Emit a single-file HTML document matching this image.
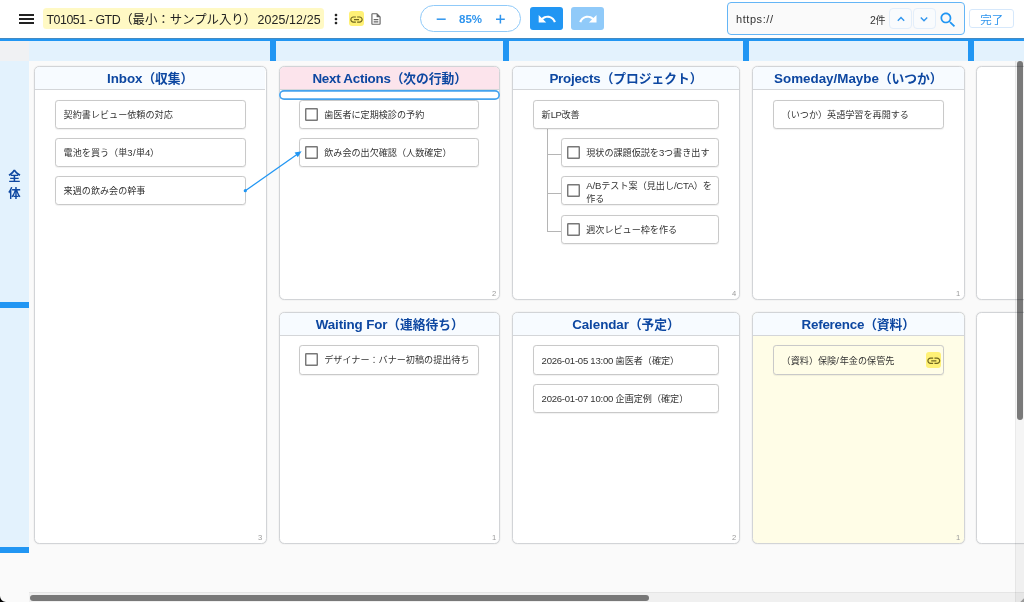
<!DOCTYPE html>
<html lang="ja">
<head>
<meta charset="utf-8">
<title>T01051 - GTD</title>
<style>
*{box-sizing:border-box;margin:0;padding:0}
html,body{width:1024px;height:602px;overflow:hidden;background:#fafafa}
body{position:relative;font-family:"Liberation Sans","Noto Sans CJK JP",sans-serif;color:#333;font-size:9.35px}
.abs{position:absolute}
.card,.zh,.cnt,#title,#rowlabel,#zoom b,#done,.tx{will-change:transform}
.l{font-size:1.05em}
.k{font-size:1em}
/* ---------- top bar ---------- */
#top{position:absolute;left:0;top:0;width:1024px;height:38px;background:#fff}
#bline{position:absolute;left:0;top:38px;width:1024px;height:3px;background:#2196f3;box-shadow:inset 0 1px 0 rgba(120,120,120,.4)}
#burger i{position:absolute;left:18.9px;width:14.9px;height:1.8px;background:#222}
#title{position:absolute;left:42.6px;top:8.2px;width:281.4px;height:21.2px;background:#fff9c4;border-radius:3.5px;font-size:12.4px;line-height:24.6px;color:#222;white-space:pre;padding-left:3.4px;overflow:hidden}
#zoom{position:absolute;left:420px;top:5px;width:101px;height:27px;border:1px solid #90caf9;border-radius:14px;background:#fff}
#zoom b{position:absolute;left:0;width:100%;top:0;line-height:27px;text-align:center;font-size:11.5px;color:#2f95ee;font-weight:700}
.btn{position:absolute;top:7.3px;width:32.7px;height:22.8px;border-radius:3px}
#search{position:absolute;left:727px;top:2px;width:238px;height:33px;border:1px solid #64b5f6;border-radius:4px;background:#fafafa}
#done{position:absolute;left:969.4px;top:9.3px;width:45.4px;height:19.4px;border:1px solid #d6e8fb;border-radius:3px;background:#fff;color:#2f95ee;font-size:11.5px;line-height:21.2px;text-align:center;overflow:hidden}
.nav{position:absolute;top:8px;height:21px;border:1px solid #e3eefa;border-radius:4px;background:#f9fbfd}
/* ---------- grid headers ---------- */
#corner{position:absolute;left:0;top:41px;width:29px;height:19.5px;background:#f0f1f3}
#colhead{position:absolute;left:29px;top:41px;width:995px;height:19.5px;background:#e3f2fd}
#rowhead{position:absolute;left:0;top:60.5px;width:29px;height:492.5px;background:#e3f2fd}
.vs{position:absolute;top:41px;width:6px;height:19.5px;background:#2196f3}
.hs{position:absolute;left:0;width:29px;height:6px;background:#2196f3}
#rowlabel{position:absolute;left:0;top:168.8px;width:29px;text-align:center;font-size:12.4px;line-height:17.3px;font-weight:700;color:#0d47a1}
/* ---------- zones ---------- */
.zone{position:absolute;background:#fff;border:1px solid #d2d4d7;border-radius:5.5px;overflow:hidden;box-shadow:0 0 1.5px rgba(0,0,0,.13)}
.zh{position:absolute;left:0;top:0;right:0;height:23.4px;background:#f7fbff;border-bottom:1px solid #d4d6d9;text-align:center;font-size:12.75px;line-height:24.6px;font-weight:700;color:#0d47a1;white-space:nowrap}
.cnt{position:absolute;right:3.2px;bottom:.6px;font-size:7.6px;line-height:8px;color:#9a9a9a}
.card{position:absolute;height:29px;background:#fff;border:1px solid #c9c9c9;border-radius:3.2px;white-space:nowrap;line-height:28px;padding-left:7.6px;color:#333;font-size:9.1px;box-shadow:0 .5px 1px rgba(0,0,0,.06)}
.card.c{padding-left:24.2px}
.cb{position:absolute;left:5.4px;top:7.4px;width:12.3px;height:12.7px;box-shadow:inset 0 0 0 1.45px #787878;border-radius:1.2px;background:#fff}
.ln{position:absolute;background:#b5b5b5}
/* ---------- scrollbars ---------- */
#vtrack{position:absolute;left:1014.6px;top:60.5px;width:9.4px;height:541.5px;background:rgba(0,0,0,.04);border-left:1px solid rgba(0,0,0,.045)}
#htrack{position:absolute;left:29px;top:592.4px;width:995px;height:10px;background:rgba(0,0,0,.04);border-top:1px solid rgba(0,0,0,.045)}
#vthumb{position:absolute;left:1016.9px;top:60.6px;width:6.1px;height:359.1px;border-radius:3.05px;background:rgba(0,0,0,.5)}
#hthumb{position:absolute;left:29.7px;top:594.6px;width:619.6px;height:6.2px;border-radius:3.1px;background:rgba(0,0,0,.5)}
</style>
</head>
<body>
<!-- grid headers -->
<div id="corner"></div>
<div id="colhead"></div>
<div id="rowhead"></div>
<div class="vs" style="left:269.7px"></div>
<div class="vs" style="left:503.1px"></div>
<div class="vs" style="left:743.1px"></div>
<div class="vs" style="left:967.5px"></div>
<div class="hs" style="top:302.4px"></div>
<div class="hs" style="top:547px"></div>
<div id="rowlabel">全<br>体</div>

<!-- ZONES -->
<div id="zones">
<!-- Inbox -->
<div class="zone" style="left:34.3px;top:66px;width:232.4px;height:477.6px"><div class="zh"><span class="l" style="letter-spacing:-0.063px">Inbox</span>（収集）</div><div class="cnt">3</div></div>
<div class="card" style="left:55px;top:99.6px;width:191px">契約書レビュー依頼の対応</div>
<div class="card" style="left:55px;top:138px;width:191px">電池を買う（単<span class="l" style="letter-spacing:0.325px">3/</span>単<span class="l" style="letter-spacing:-0.265px">4</span>）</div>
<div class="card" style="left:55px;top:176.4px;width:191px">来週の飲み会の幹事</div>

<!-- Next Actions -->
<div class="zone" style="left:278.6px;top:66px;width:221.6px;height:233.6px"><div class="zh" style="background:#fce4ec"><span class="l" style="letter-spacing:-0.258px">Next Actions</span>（次の行動）</div><div class="cnt">2</div></div>
<div class="abs" style="left:278.5px;top:89.8px;width:221.7px;height:10.1px;box-shadow:inset 0 0 0 1.7px #45a3ee;border-radius:5.1px;background:#fff"></div>
<div class="card c" style="left:299.4px;top:99.6px;width:180.2px"><i class="cb"></i>歯医者に定期検診の予約</div>
<div class="card c" style="left:299.4px;top:138px;width:180.2px"><i class="cb"></i>飲み会の出欠確認（人数確定）</div>

<!-- Projects -->
<div class="zone" style="left:512.1px;top:66px;width:228px;height:233.6px"><div class="zh"><span class="l" style="letter-spacing:-0.192px">Projects</span>（プロジェクト）</div><div class="cnt">4</div></div>
<div class="ln" style="left:546.5px;top:128.6px;width:1px;height:103.3px"></div>
<div class="ln" style="left:546.5px;top:154px;width:15px;height:1px"></div>
<div class="ln" style="left:546.5px;top:192.8px;width:15px;height:1px"></div>
<div class="ln" style="left:546.5px;top:230.9px;width:15px;height:1px"></div>
<div class="card" style="left:533.2px;top:99.8px;width:185.7px">新<span class="l" style="letter-spacing:-0.493px">LP</span>改善</div>
<div class="card c" style="left:561.1px;top:138.2px;width:157.8px"><i class="cb"></i>現状の課題仮説を<span class="l" style="letter-spacing:-0.265px">3</span>つ書き出す</div>
<div class="card c" style="left:561.1px;top:176.3px;width:157.8px;line-height:13.1px;padding-top:1.6px"><i class="cb"></i><span class="l" style="letter-spacing:-0.108px">A/B</span>テスト案（見出し<span class="l" style="letter-spacing:-0.347px">/CTA</span>）を<br>作る</div>
<div class="card c" style="left:561.1px;top:214.5px;width:157.8px"><i class="cb"></i>週次レビュー枠を作る</div>

<!-- Someday/Maybe -->
<div class="zone" style="left:752.1px;top:66px;width:212.7px;height:233.6px"><div class="zh"><span class="l" style="letter-spacing:-0.001px">Someday/Maybe</span>（いつか）</div><div class="cnt">1</div></div>
<div class="card" style="left:772.6px;top:99.6px;width:171.2px">（いつか）英語学習を再開する</div>

<!-- blank zones (right) -->
<div class="zone" style="left:976.3px;top:66px;width:80px;height:233.6px"></div>
<div class="zone" style="left:976.3px;top:312px;width:80px;height:231.6px"></div>

<!-- Waiting For -->
<div class="zone" style="left:278.6px;top:312px;width:221.6px;height:231.6px"><div class="zh"><span class="l" style="letter-spacing:-0.141px">Waiting For</span>（連絡待ち）</div><div class="cnt">1</div></div>
<div class="card c" style="left:299.4px;top:345.4px;width:180.2px;height:30px;line-height:29px"><i class="cb"></i>デザイナー：バナー初稿の提出待ち</div>

<!-- Calendar -->
<div class="zone" style="left:512.1px;top:312px;width:228px;height:231.6px"><div class="zh"><span class="l" style="letter-spacing:-0.061px">Calendar</span>（予定）</div><div class="cnt">2</div></div>
<div class="card" style="left:533.2px;top:345.4px;width:185.7px;height:30px;line-height:29px"><span class="l" style="letter-spacing:-0.247px">2026-01-05 13:00</span> 歯医者（確定）</div>
<div class="card" style="left:533.2px;top:383.5px;width:185.7px"><span class="l" style="letter-spacing:-0.247px">2026-01-07 10:00</span> 企画定例（確定）</div>

<!-- Reference -->
<div class="zone" style="left:752.1px;top:312px;width:212.7px;height:231.6px;background:#fffde7"><div class="zh"><span class="l" style="letter-spacing:-0.236px">Reference</span>（資料）</div><div class="cnt">1</div></div>
<div class="card" style="left:772.6px;top:345.4px;width:171.2px;background:#fffde7;height:30px;line-height:29px">（資料）保険<span class="l" style="letter-spacing:0.913px">/</span>年金の保管先</div>
<div class="abs" style="left:925.5px;top:352.3px;width:15.6px;height:15.6px;border-radius:3px;background:#fff176"></div>
<svg class="abs" style="left:925.5px;top:352.9px" width="15.6" height="15.6" viewBox="0 0 24 24"><path fill="#6f6620" d="M3.9 12c0-1.71 1.39-3.1 3.1-3.1h4V7H7c-2.76 0-5 2.24-5 5s2.24 5 5 5h4v-1.900H7c-1.710 0-3.100-1.390-3.100-3.100zM8 13h8v-2H8v2zm9-6h-4v1.900h4c1.710 0 3.100 1.390 3.100 3.100s-1.390 3.100-3.100 3.100h-4V17h4c2.760 0 5-2.240 5-5s-2.240-5-5-5z"/></svg>

<!-- arrow -->
<svg class="abs" style="left:240px;top:145px" width="70" height="52" viewBox="240 145 70 52"><line x1="245.3" y1="190.7" x2="298" y2="153.8" stroke="#2196f3" stroke-width="1.3"/><circle cx="245.3" cy="190.7" r="1.6" fill="#2196f3"/><path d="M301.6 151.2 L294.6 152.6 L297.8 157.2 Z" fill="#2196f3"/></svg>
</div>

<!-- scrollbars -->
<div id="htrack"></div>
<div id="vtrack"></div>
<div id="vthumb"></div>
<div id="hthumb"></div>

<!-- top bar -->
<div id="top"></div>
<div id="bline"></div>
<div id="burger"><i style="top:13.9px"></i><i style="top:18px"></i><i style="top:22.1px"></i></div>
<div id="title"><span class="l k" style="letter-spacing:-.449px">T01051 - GTD</span>（最小：サンプル入り） <span class="l k" style="letter-spacing:.135px;margin-left:-2.2px">2025/12/25</span></div>

<!-- kebab -->
<svg class="abs" style="left:327.6px;top:10.8px" width="16" height="16" viewBox="0 0 24 24"><path fill="#222" d="M12 8c1.100 0 2-.900 2-2s-.900-2-2-2-2 .900-2 2 .900 2 2 2zm0 2c-1.100 0-2 .900-2 2s.900 2 2 2 2-.900 2-2-.900-2-2-2zm0 6c-1.100 0-2 .900-2 2s.900 2 2 2 2-.900 2-2-.900-2-2-2z"/></svg>
<!-- link chip -->
<div class="abs" style="left:348.8px;top:11.3px;width:15px;height:14.8px;border-radius:3px;background:#fff176"></div>
<svg class="abs" style="left:348.8px;top:11.6px" width="15" height="15" viewBox="0 0 24 24"><path fill="#6f6620" d="M3.9 12c0-1.71 1.39-3.1 3.1-3.1h4V7H7c-2.76 0-5 2.24-5 5s2.24 5 5 5h4v-1.900H7c-1.710 0-3.100-1.390-3.100-3.100zM8 13h8v-2H8v2zm9-6h-4v1.900h4c1.710 0 3.100 1.390 3.100 3.100s-1.390 3.100-3.100 3.100h-4V17h4c2.760 0 5-2.240 5-5s-2.240-5-5-5z"/></svg>
<!-- doc icon -->
<svg class="abs" style="left:368.8px;top:12px" width="14" height="14" viewBox="0 0 24 24"><path fill="#666" d="M8 16h8v2H8zm0-4h8v2H8zm6-10H6c-1.100 0-2 .900-2 2v16c0 1.100.890 2 1.990 2H18c1.100 0 2-.900 2-2V8l-6-6zm4 18H6V4h7v5h5v11z"/></svg>
<!-- zoom pill -->
<div id="zoom"><b>85%</b></div>
<svg class="abs" style="left:436px;top:13.5px" width="11" height="11" viewBox="0 0 11 11"><path d="M0.700 5.200H9.700" stroke="#2f95ee" stroke-width="1.500" fill="none"/></svg>
<svg class="abs" style="left:494.500px;top:13.500px" width="11" height="11" viewBox="0 0 11 11"><path d="M1 5.200H9.800M5.400 0.800V9.600" stroke="#2f95ee" stroke-width="1.500" fill="none"/></svg>
<!-- undo / redo -->
<div class="btn" style="left:530.3px;background:#2196f3"></div>
<svg class="abs" style="left:536.5px;top:8.7px" width="20.200" height="20.200" viewBox="0 0 24 24"><path fill="#fff" d="M12.500 8c-2.650 0-5.050.990-6.900 2.600L2 7v9h9l-3.620-3.620c1.390-1.160 3.160-1.880 5.120-1.880 3.540 0 6.550 2.310 7.600 5.500l2.370-.780C21.080 11.030 17.150 8 12.500 8z"/></svg>
<div class="btn" style="left:571.4px;background:#90caf9"></div>
<svg class="abs" style="left:577.600px;top:8.700px" width="20.200" height="20.200" viewBox="0 0 24 24"><path fill="#fff" d="M18.400 10.600C16.550 8.990 14.150 8 11.500 8c-4.650 0-8.580 3.030-9.960 7.220L3.900 16c1.050-3.190 4.050-5.500 7.600-5.500 1.950 0 3.730.720 5.120 1.880L13 16h9V7l-3.600 3.600z"/></svg>
<!-- search -->
<div id="search"></div>
<div class="abs tx" style="left:736.2px;top:9.8px;font-size:11px;line-height:18px;color:#333"><span style="letter-spacing:.56px">https://</span></div>
<div class="abs tx" style="left:870.2px;top:11.4px;font-size:10px;line-height:18px;color:#333;white-space:nowrap"><span class="l" style="letter-spacing:-0.290px">2</span>件</div>
<div class="nav" style="left:889.300px;width:23.200px"></div>
<div class="nav" style="left:912.800px;width:22.900px"></div>
<svg class="abs" style="left:895.900px;top:14px" width="10" height="10" viewBox="0 0 10 10"><path d="M1.800 6.700L5 3.500L8.200 6.700" stroke="#2f95ee" stroke-width="1.400" fill="none"/></svg>
<svg class="abs" style="left:919.200px;top:14px" width="10" height="10" viewBox="0 0 10 10"><path d="M1.800 3.600L5 6.800L8.200 3.600" stroke="#2f95ee" stroke-width="1.400" fill="none"/></svg>
<svg class="abs" style="left:937.500px;top:9.500px" width="20" height="20" viewBox="0 0 24 24"><path fill="#2196f3" d="M15.500 14h-.790l-.280-.270C15.410 12.590 16 11.110 16 9.500 16 5.910 13.090 3 9.500 3S3 5.910 3 9.500 5.910 16 9.500 16c1.610 0 3.090-.590 4.230-1.570l.270.280v.790l5 4.990L20.490 19l-4.990-5zm-6 0C7.010 14 5 11.990 5 9.500S7.010 5 9.500 5 14 7.010 14 9.500 11.990 14 9.500 14z"/></svg>
<div id="done">完了</div>

<!-- device corners -->
<svg class="abs" style="left:0;top:592px" width="10" height="10" viewBox="0 0 10 10"><path d="M0 4 A6 6 0 0 0 6 10 L0 10 Z" fill="#000"/></svg>
<svg class="abs" style="left:1014px;top:592px" width="10" height="10" viewBox="0 0 10 10"><path d="M10 6.3 L6.3 10 L10 10 Z" fill="#999"/></svg>
</body>
</html>
